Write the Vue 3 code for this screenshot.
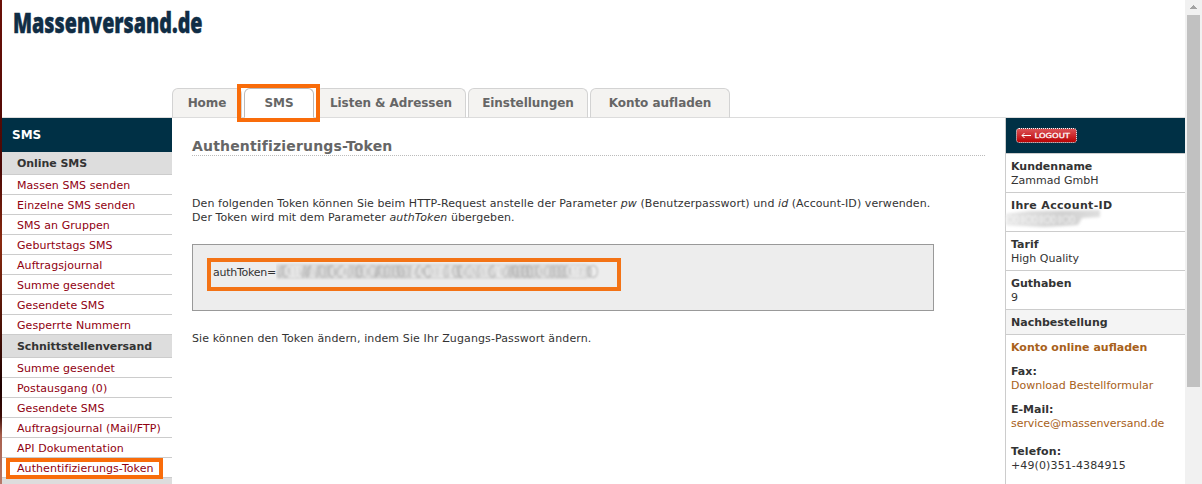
<script setup>
const tabs = [
  { label: 'Home', cls: 'home' },
  { label: 'SMS', cls: 'sms', active: true },
  { label: 'Listen & Adressen', cls: 'listen' },
  { label: 'Einstellungen', cls: 'einst' },
  { label: 'Konto aufladen', cls: 'konto' },
]
const menu = [
  {
    title: 'Online SMS',
    items: ['Massen SMS senden', 'Einzelne SMS senden', 'SMS an Gruppen', 'Geburtstags SMS', 'Auftragsjournal', 'Summe gesendet', 'Gesendete SMS', 'Gesperrte Nummern'],
  },
  {
    title: 'Schnittstellenversand',
    items: ['Summe gesendet', 'Postausgang (0)', 'Gesendete SMS', 'Auftragsjournal (Mail/FTP)', 'API Dokumentation', 'Authentifizierungs-Token'],
  },
]
const account = [
  { k: 'Kundenname', v: 'Zammad GmbH' },
  { k: 'Ihre Account-ID', hidden: true, wide: true },
  { k: 'Tarif', v: 'High Quality' },
  { k: 'Guthaben', v: '9' },
]
const noise = n => {
  const v = Math.sin(n * 127.1 + 3.7) * 43758.5453
  return v - Math.floor(v)
}
const tones = ['#bdbdbd', '#ececec', '#c6c6c6', '#b3b3b3', '#e4e4e4']
const smudges = Array.from({ length: 68 }, (_, i) => ({
  x: 5 + i * 4.6,
  rx: 1.2 + noise(i) * 2.8,
  tilt: (noise(i + 100) - 0.5) * 36,
  tone: tones[Math.floor(noise(i + 200) * 5)],
}))
</script>

<template>
  <div class="page">
    <div class="edge"></div>
    <div class="site">
      <header>
        <svg class="logo" width="200" height="44" viewBox="0 0 200 44">
          <text x="0" y="32" textLength="189.5" lengthAdjust="spacingAndGlyphs">Massenversand.de</text>
        </svg>
        <nav>
          <div v-for="t in tabs" :key="t.label" class="tab" :class="[t.cls, { active: t.active }]">
            <span>{{ t.label }}</span>
            <i v-if="t.active" class="mark mark-tab"></i>
          </div>
        </nav>
      </header>
      <div class="cols">
        <aside class="left">
          <div class="bar">SMS</div>
          <template v-for="g in menu" :key="g.title">
            <div class="group">{{ g.title }}</div>
            <div v-for="m in g.items" :key="m" class="item">
              <a>{{ m }}</a>
              <i v-if="m === 'Authentifizierungs-Token'" class="mark mark-item"></i>
            </div>
          </template>
          <div class="group"></div>
        </aside>
        <main>
          <h1>Authentifizierungs-Token</h1>
          <p class="intro">
            Den folgenden Token können Sie beim HTTP-Request anstelle der Parameter <em>pw</em> (Benutzerpasswort) und <em>id</em> (Account-ID) verwenden.<br>
            Der Token wird mit dem Parameter <em>authToken</em> übergeben.
          </p>
          <div class="box">
            <div class="token">
              <span>authToken=</span>
              <svg class="smudge" width="330" height="18" viewBox="0 0 330 18">
                <defs>
                  <filter id="soft" x="-5%" y="-30%" width="110%" height="160%"><feGaussianBlur stdDeviation="0.9" /></filter>
                </defs>
                <rect x="0" y="1" width="312" height="15" rx="2" fill="#d8d8d8" filter="url(#soft)" />
                <g filter="url(#soft)" fill="none" stroke-width="1.4">
                  <ellipse v-for="s in smudges" :key="s.x" :cx="s.x" cy="8.5" :rx="s.rx" ry="5.5" :stroke="s.tone" :transform="`rotate(${s.tilt} ${s.x} 8.5)`" />
                  <ellipse cx="317" cy="8.5" rx="4.5" ry="6" stroke="#c4c4c4" />
                </g>
              </svg>
            </div>
          </div>
          <p class="note">Sie können den Token ändern, indem Sie Ihr Zugangs-Passwort ändern.</p>
        </main>
        <aside class="right">
          <div class="logbar">
            <svg width="62" height="16" viewBox="0 0 62 16">
              <defs>
                <linearGradient id="red" x1="0" y1="0" x2="0" y2="1">
                  <stop offset="0" stop-color="#dc5558" /><stop offset=".5" stop-color="#cc2a2e" /><stop offset="1" stop-color="#b80000" />
                </linearGradient>
              </defs>
              <rect x="0.5" y="0.5" width="60" height="14" rx="2.5" fill="url(#red)" stroke="#fff" stroke-dasharray="1 1" />
              <path d="M6 7.5H15M8.5 5L6 7.5L8.5 10" fill="none" stroke="#fff" />
              <text x="18.5" y="10" textLength="35.5" lengthAdjust="spacingAndGlyphs">LOGOUT</text>
            </svg>
          </div>
          <div v-for="a in account" :key="a.k" class="row">
            <b :class="{ wide: a.wide }">{{ a.k }}</b>
            <div v-if="!a.hidden">{{ a.v }}</div>
            <svg v-else class="veil" width="100" height="22" viewBox="0 0 100 22">
              <defs>
                <filter id="soft2" x="-10%" y="-30%" width="120%" height="160%"><feGaussianBlur stdDeviation="1.6" /></filter>
                <linearGradient id="fade" x1="0" y1="0" x2="1" y2="0">
                  <stop offset="0" stop-color="#e6e6e6" /><stop offset=".6" stop-color="#d0d0d0" /><stop offset="1" stop-color="#dedede" />
                </linearGradient>
              </defs>
              <path d="M2 6L25 3L96 2V9L78 10L74 17L40 19L2 17Z" fill="url(#fade)" filter="url(#soft2)" />
              <g fill="none" stroke="#fff" stroke-width="1.3" opacity=".45" filter="url(#soft)">
                <ellipse v-for="n in 11" :key="n" :cx="n * 6.2" cy="11.5" :rx="1 + (n * 5) % 3" ry="3.5" />
              </g>
            </svg>
          </div>
          <div class="sub">Nachbestellung</div>
          <div class="order">
            <a class="strong">Konto online aufladen</a>
            <dl class="fax"><dt>Fax:</dt><dd><a>Download Bestellformular</a></dd></dl>
            <dl class="mail"><dt>E-Mail:</dt><dd><a>service@massenversand.de</a></dd></dl>
            <dl class="tel"><dt>Telefon:</dt><dd>+49(0)351-4384915</dd></dl>
          </div>
        </aside>
      </div>
    </div>
    <div class="scroll">
      <svg width="17" height="15" viewBox="0 0 17 15" shape-rendering="crispEdges"><path d="M8 5h1v1h1v1h1v1h1v1H5V8h1V7h1V6h1z" fill="#a3a3a3" /></svg>
      <div class="thumb"></div>
    </div>
  </div>
</template>

<style>
body { margin: 0; overflow: hidden; }
</style>

<style scoped>
.page { width: 1202px; height: 484px; display: flex; overflow: hidden; background: #fff; color: #333; font: 11px/14px "DejaVu Sans", Verdana, sans-serif; }
.edge { width: 2px; background: linear-gradient(#6b1008, #4a0805 35%, #8a2a10 50%, #1c0000 80%, #3a0a05 86%, #a8604e 90%, #b87868); }
.site { width: 1183px; height: 484px; display: flex; flex-direction: column; }
header { height: 117px; flex: none; border-bottom: 1px solid #dcdcdc; display: flex; flex-direction: column; justify-content: space-between; }
.logo { display: block; margin: 1px 0 0 11px; }
.logo text { font: 800 28px "Open Sans", sans-serif; fill: #102d45; stroke: #102d45; stroke-width: .5px; }
nav { display: flex; gap: 2px; margin: 0 0 -1px 170px; }
.tab { position: relative; box-sizing: border-box; height: 30px; border: 1px solid #d3d3d3; border-bottom-color: #dcdcdc; border-radius: 6px 6px 0 0; background: #f4f3f1; display: flex; justify-content: center; font: bold 12px/29px "DejaVu Sans", Verdana, sans-serif; letter-spacing: -.06px; color: #666; white-space: nowrap; }
.tab.active { background: #fff; border-color: #bbb; border-bottom-color: #fff; }
.home { width: 70px; }
.sms { width: 70px; }
.listen { width: 150px; }
.einst { width: 120px; }
.konto { width: 140px; }
.mark { position: absolute; box-sizing: border-box; border: 4px solid #f96c0a; z-index: 2; }
.mark-tab { left: -8px; top: -5px; width: 83px; height: 38px; }
.mark-item { left: 4px; top: 0; width: 157px; height: 21px; }
.cols { flex: 1; display: flex; min-height: 0; }
.left { width: 170px; flex: none; }
.bar { height: 34px; background: #003045; color: #fff; font-weight: bold; font-size: 12px; line-height: 34px; padding-left: 10px; }
.group { height: 22px; background: #ddd; border-bottom: 1px solid #ccc; font-weight: bold; line-height: 24px; letter-spacing: -.06px; padding-left: 15px; }
.item { position: relative; height: 19px; border-bottom: 1px solid #ccc; line-height: 22px; letter-spacing: .07px; padding-left: 15px; color: #900010; white-space: nowrap; }
main { width: 793px; flex: none; padding: 0 20px; }
h1 { margin: 0; height: 37px; line-height: 56px; font-size: 14px; letter-spacing: .17px; color: #666; border-bottom: 1px dotted #bbb; }
.intro { margin: 41px 0 0; letter-spacing: .07px; white-space: nowrap; }
.box { box-sizing: border-box; width: 742px; height: 67px; margin-top: 19px; border: 1px solid #999; background: #ededed; padding: 13px 14px; }
.token { box-sizing: border-box; width: 414px; height: 33px; border: 4px solid #f37316; padding: 4px 2px 0; display: flex; letter-spacing: -.25px; white-space: nowrap; }
.smudge { margin-top: -3px; flex: none; }
.note { margin: 21px 0 0; letter-spacing: .11px; }
.right { width: 179px; flex: none; border-left: 1px solid #ccc; }
.logbar { height: 35px; background: #003045; border-bottom: 1px solid #ccc; display: flex; }
.logbar svg { margin: 10px 0 0 10px; }
.logbar text { font: 7px "DejaVu Sans", sans-serif; fill: #fff; stroke: #fff; stroke-width: .25px; }
.row { position: relative; box-sizing: border-box; height: 39px; border-bottom: 1px solid #ccc; padding: 6px 0 0 5px; }
.row b { display: block; }
.row .wide { letter-spacing: .33px; }
.veil { position: absolute; left: -2px; top: 15px; }
.sub { height: 24px; line-height: 25px; background: #f4f4f4; border-bottom: 1px solid #ccc; font-weight: bold; padding-left: 5px; }
.order { padding: 6px 0 0 5px; white-space: nowrap; }
.order a { color: #a8611a; }
.strong { display: block; font-weight: bold; }
dl { margin: 10px 0 0; }
.tel { margin-top: 14px; letter-spacing: .12px; }
dt { font-weight: bold; }
dd { margin: 0; }
.mail dd { letter-spacing: -.05px; }
.scroll { width: 17px; background: #f1f1f1; }
.scroll svg { display: block; }
.thumb { width: 13px; height: 372px; margin: 0 2px; background: #c1c1c1; }
</style>
